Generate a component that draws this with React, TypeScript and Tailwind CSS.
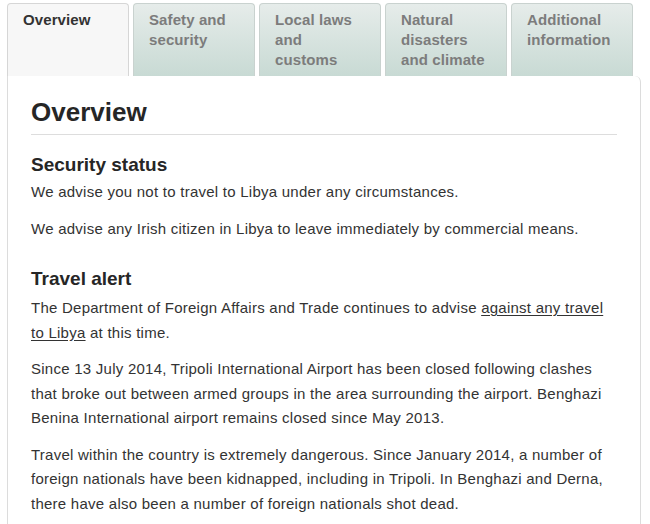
import React from "react";

const tabs = [
  { label: ["Overview"], active: true },
  { label: ["Safety and", "security"] },
  { label: ["Local laws", "and", "customs"] },
  { label: ["Natural", "disasters", "and climate"] },
  { label: ["Additional", "information"] },
];

export default function App() {
  return (
    <div
      className="w-[650px] h-[524px] overflow-hidden bg-white"
      style={{ fontFamily: '"Liberation Sans", Arial, sans-serif' }}
    >
      <div className="flex gap-[4px] pl-[7px] pt-[3px]">
        {tabs.map((t, i) => (
          <div
            key={i}
            className={
              "w-[122px] h-[73px] rounded-t-[4px] border border-b-0 px-[15px] pt-[6px] text-[15px] font-bold leading-[20px] tracking-[0.1px] " +
              (t.active
                ? "bg-[#f7f7f7] border-[#d6d6d6] text-[#333333]"
                : "bg-gradient-to-b from-[#e6ecea] to-[#c8dad4] border-[#c9d2cf] text-[#7c7c7c]")
            }
          >
            {t.label.map((l, j) => (
              <div key={j}>{l}</div>
            ))}
          </div>
        ))}
      </div>
      <div className="ml-[7px] w-[634px] h-[460px] rounded-tr-[6px] border border-b-0 border-t-0 border-[#dcdcdc] bg-white px-[23px] pt-[20px] text-[#333333]">
        <h1 className="text-[26px] font-bold leading-[32px] text-[#262626]">Overview</h1>
        <div className="mt-[6px] h-px bg-[#dddddd]" />
        <h2 className="mt-[18px] text-[19px] font-bold leading-[24px] text-[#262626]">Security status</h2>
        <div className="text-[15px] tracking-[0.25px] leading-[25px]">
          <p className="mt-[2px]">We advise you not to travel to Libya under any circumstances.</p>
          <p className="mt-[12px]">We advise any Irish citizen in Libya to leave immediately by commercial means.</p>
        </div>
        <h2 className="mt-[26px] text-[19px] font-bold leading-[24px] text-[#262626]">Travel alert</h2>
        <div className="text-[15px] tracking-[0.25px] leading-[25px]">
          <p className="mt-[4px]">
            The Department of Foreign Affairs and Trade continues to advise{" "}
            <span className="underline underline-offset-2">against any travel to Libya</span> at this time.
          </p>
          <p className="mt-[12px] leading-[24.5px]">
            Since 13 July 2014, Tripoli International Airport has been closed following clashes that broke out between armed groups in the area surrounding the airport. Benghazi Benina International airport remains closed since May 2013.
          </p>
          <p className="mt-[12px] leading-[24.5px]">
            Travel within the country is extremely dangerous. Since January 2014, a number of foreign nationals have been kidnapped, including in Tripoli. In Benghazi and Derna, there have also been a number of foreign nationals shot dead.
          </p>
        </div>
      </div>
    </div>
  );
}
